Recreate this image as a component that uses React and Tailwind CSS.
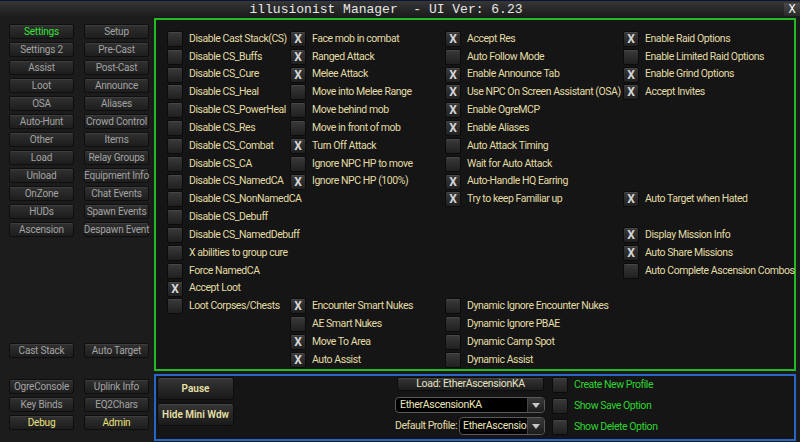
import React from "react";

const ROW = [
  "row-start-1", "row-start-2", "row-start-3", "row-start-4", "row-start-5",
  "row-start-6", "row-start-7", "row-start-8", "row-start-9", "row-start-10",
  "row-start-11", "row-start-12", "row-start-13", "row-start-14", "row-start-15",
  "row-start-16", "row-start-17", "row-start-18", "row-start-19",
];
const COL = ["col-start-1", "col-start-2", "col-start-3", "col-start-4"];

// [column, row, label, checked]
const OPTIONS = [
  [0, 0, "Disable Cast Stack(CS)", false],
  [0, 1, "Disable CS_Buffs", false],
  [0, 2, "Disable CS_Cure", false],
  [0, 3, "Disable CS_Heal", false],
  [0, 4, "Disable CS_PowerHeal", false],
  [0, 5, "Disable CS_Res", false],
  [0, 6, "Disable CS_Combat", false],
  [0, 7, "Disable CS_CA", false],
  [0, 8, "Disable CS_NamedCA", false],
  [0, 9, "Disable CS_NonNamedCA", false],
  [0, 10, "Disable CS_Debuff", false],
  [0, 11, "Disable CS_NamedDebuff", false],
  [0, 12, "X abilities to group cure", false],
  [0, 13, "Force NamedCA", false],
  [0, 14, "Accept Loot", true],
  [0, 15, "Loot Corpses/Chests", false],

  [1, 0, "Face mob in combat", true],
  [1, 1, "Ranged Attack", true],
  [1, 2, "Melee Attack", true],
  [1, 3, "Move into Melee Range", false],
  [1, 4, "Move behind mob", false],
  [1, 5, "Move in front of mob", false],
  [1, 6, "Turn Off Attack", true],
  [1, 7, "Ignore NPC HP to move", false],
  [1, 8, "Ignore NPC HP (100%)", true],
  [1, 15, "Encounter Smart Nukes", true],
  [1, 16, "AE Smart Nukes", false],
  [1, 17, "Move To Area", true],
  [1, 18, "Auto Assist", true],

  [2, 0, "Accept Res", true],
  [2, 1, "Auto Follow Mode", false],
  [2, 2, "Enable Announce Tab", true],
  [2, 3, "Use NPC On Screen Assistant (OSA)", true],
  [2, 4, "Enable OgreMCP", true],
  [2, 5, "Enable Aliases", true],
  [2, 6, "Auto Attack Timing", false],
  [2, 7, "Wait for Auto Attack", false],
  [2, 8, "Auto-Handle HQ Earring", true],
  [2, 9, "Try to keep Familiar up", true],
  [2, 15, "Dynamic Ignore Encounter Nukes", false],
  [2, 16, "Dynamic Ignore PBAE", false],
  [2, 17, "Dynamic Camp Spot", false],
  [2, 18, "Dynamic Assist", false],

  [3, 0, "Enable Raid Options", true],
  [3, 1, "Enable Limited Raid Options", false],
  [3, 2, "Enable Grind Options", true],
  [3, 3, "Accept Invites", true],
  [3, 9, "Auto Target when Hated", true],
  [3, 11, "Display Mission Info", true],
  [3, 12, "Auto Share Missions", true],
  [3, 13, "Auto Complete Ascension Combos", false],
];

const NAV = [
  ["Settings", "Setup"],
  ["Settings 2", "Pre-Cast"],
  ["Assist", "Post-Cast"],
  ["Loot", "Announce"],
  ["OSA", "Aliases"],
  ["Auto-Hunt", "Crowd Control"],
  ["Other", "Items"],
  ["Load", "Relay Groups"],
  ["Unload", "Equipment Info"],
  ["OnZone", "Chat Events"],
  ["HUDs", "Spawn Events"],
  ["Ascension", "Despawn Event"],
];

function Box({ checked }) {
  return (
    <div className="w-4 h-4 shrink-0 rounded-[2px] border border-[#0b0b0b] bg-gradient-to-b from-[#3a3a3a] to-[#202020] shadow-[inset_0_1px_0_#474747] flex items-center justify-center text-[12px] leading-none font-bold text-[#d6d6d6]">
      {checked ? "X" : ""}
    </div>
  );
}

function NavButton({ label, tone = "text-[#a3a3a3]" }) {
  return (
    <div className={`w-[65px] h-[15px] rounded-[2px] border border-[#0e0e0e] bg-gradient-to-b from-[#313131] to-[#1d1d1d] shadow-[inset_0_1px_0_#3e3e3e] flex items-center justify-center text-[10px] tracking-[-0.2px] leading-none whitespace-nowrap ${tone}`}>
      {label}
    </div>
  );
}

function Arrow() {
  return (
    <div className="w-[17px] h-full shrink-0 border-l border-[#444] rounded-r-[4px] bg-gradient-to-b from-[#3a3a3a] to-[#1c1c1c] flex items-center justify-center">
      <svg width="8" height="5" viewBox="0 0 8 5">
        <path d="M0 0h8L4 5z" fill="#c8c8c8" />
      </svg>
    </div>
  );
}

export default function App() {
  return (
    <div className="w-[800px] h-[442px] flex flex-col overflow-hidden bg-[#1b1b1b] font-['Roboto',sans-serif]">
      {/* Title bar */}
      <div className="h-[18px] shrink-0 relative flex items-center justify-center pr-[28px] border-t border-[#0d1433] bg-gradient-to-b from-[#363636] to-[#1a1a1a]">
        <span className="font-['Liberation_Mono',monospace] text-[13px] leading-none text-[#e6e6e6] whitespace-pre">
          illusionist Manager  - UI Ver: 6.23
        </span>
        <div className="absolute right-0 top-[2px] w-[16px] h-[13px] bg-gradient-to-b from-[#4a4a4a] to-[#2a2a2a] flex items-center justify-center font-['Liberation_Mono',monospace] text-[12px] leading-none text-white">
          X
        </div>
      </div>

      <div className="flex flex-1 min-h-0">
        {/* Left navigation */}
        <div className="w-[154px] shrink-0 flex flex-col pl-[9px] pt-[6px] pb-[12px] bg-[#1c1c1c]">
          <div className="grid grid-cols-[65px_65px] gap-x-[10px] gap-y-[3px]">
            {NAV.map(([a, b]) => (
              <React.Fragment key={a}>
                <NavButton label={a} tone={a === "Settings" ? "text-[#35e035]" : "text-[#a3a3a3]"} />
                <NavButton label={b} />
              </React.Fragment>
            ))}
          </div>
          <div className="flex-1" />
          <div className="grid grid-cols-[65px_65px] gap-x-[10px]">
            <NavButton label="Cast Stack" />
            <NavButton label="Auto Target" />
          </div>
          <div className="grid grid-cols-[65px_65px] gap-x-[10px] gap-y-[3px] mt-[21px]">
            <NavButton label="OgreConsole" />
            <NavButton label="Uplink Info" />
            <NavButton label="Key Binds" />
            <NavButton label="EQ2Chars" />
            <NavButton label="Debug" tone="text-[#ece27c]" />
            <NavButton label="Admin" tone="text-[#ece27c]" />
          </div>
        </div>

        {/* Right side */}
        <div className="w-[644px] flex flex-col">
          <div className="h-[353px] border-2 border-[#23bb23] bg-[#151515] pl-[11px] pt-[11px] mr-[2px]">
            <div className="grid grid-cols-[123px_155px_178px_1fr] grid-rows-[repeat(19,17.83px)]">
              {OPTIONS.map(([c, r, label, checked]) => (
                <div key={label} className={`${COL[c]} ${ROW[r]} flex items-center gap-[6px] h-4 whitespace-nowrap`}>
                  <Box checked={checked} />
                  <span className="text-[10.5px] tracking-[-0.45px] leading-none text-[#e2dca4]">{label}</span>
                </div>
              ))}
            </div>
          </div>

          <div className="h-[67px] mt-[3px] mr-[2px] border-2 border-[#2865c4] bg-[#151515] flex pl-[1px] pt-[1px]">
            <div className="w-[77px] flex flex-col gap-[3px]">
              <div className="h-[23px] rounded-[3px] border border-[#0c0c0c] bg-gradient-to-b from-[#363636] to-[#1a1a1a] shadow-[inset_0_1px_0_#444] flex items-center justify-center text-[10px] font-semibold text-[#e8e0a6]">
                Pause
              </div>
              <div className="h-[23px] rounded-[3px] border border-[#0c0c0c] bg-gradient-to-b from-[#363636] to-[#1a1a1a] shadow-[inset_0_1px_0_#444] flex items-center justify-center text-[10px] font-semibold text-[#e8e0a6]">
                Hide Mini Wdw
              </div>
            </div>

            <div className="w-[150px] ml-[161px] flex flex-col">
              <div className="h-[14px] ml-[2px] w-[147px] rounded-[2px] border border-[#0c0c0c] bg-gradient-to-b from-[#353535] to-[#1c1c1c] shadow-[inset_0_1px_0_#444] flex items-center justify-center text-[10.5px] tracking-[-0.3px] leading-none text-[#e6e2c2]">
                Load: EtherAscensionKA
              </div>
              <div className="h-[16px] mt-[6px] rounded-[4px] border border-[#5a5a5a] bg-black flex">
                <span className="flex-1 pl-[4px] flex items-center text-[10.5px] tracking-[-0.3px] leading-none text-[#eae6b8]">EtherAscensionKA</span>
                <Arrow />
              </div>
              <div className="h-[18px] mt-[4px] flex items-center justify-end gap-[2px]">
                <span className="text-[10.5px] tracking-[-0.45px] leading-none text-[#e2dca4] whitespace-nowrap">Default Profile:</span>
                <div className="w-[86px] shrink-0 h-full rounded-[4px] border border-[#5a5a5a] bg-black flex overflow-hidden">
                  <span className="flex-1 min-w-0 overflow-hidden whitespace-nowrap pl-[3px] flex items-center text-[10.5px] tracking-[-0.3px] leading-none text-[#eae6b8]">EtherAscensionKA</span>
                  <Arrow />
                </div>
              </div>
            </div>

            <div className="ml-[7px] flex flex-col gap-[5px]">
              {["Create New Profile", "Show Save Option", "Show Delete Option"].map((t) => (
                <div key={t} className="flex items-center gap-[6px] h-4">
                  <Box checked={false} />
                  <span className="text-[10.5px] tracking-[-0.45px] leading-none text-[#2ed42e] whitespace-nowrap">{t}</span>
                </div>
              ))}
            </div>
          </div>
        </div>
      </div>
    </div>
  );
}
